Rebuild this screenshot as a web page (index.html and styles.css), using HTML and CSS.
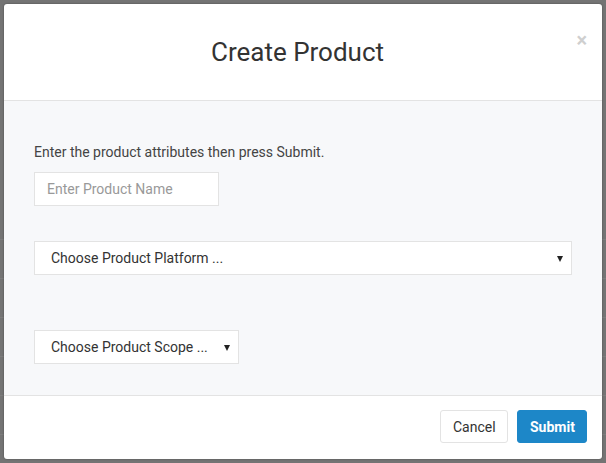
FILE: index.html
```html
<!DOCTYPE html>
<html lang="en">
<head>
<meta charset="utf-8">
<title>Create Product</title>
<link rel="stylesheet" href="styles.css">
</head>
<body>
<div class="backdrop">
  <div class="modal">
    <div class="modal-header">
      <h1 class="modal-title">Create Product</h1>
      <span class="close">&times;</span>
    </div>
    <div class="modal-body">
      <p class="intro">Enter the product attributes then press Submit.</p>
      <div class="input"><span class="placeholder">Enter Product Name</span></div>
      <div class="select select-wide">
        <span class="select-text">Choose Product Platform ...</span>
        <span class="caret"></span>
      </div>
      <div class="select select-narrow">
        <span class="select-text">Choose Product Scope ...</span>
        <span class="caret"></span>
      </div>
    </div>
    <div class="modal-footer">
      <button class="btn btn-default">Cancel</button>
      <button class="btn btn-primary">Submit</button>
    </div>
  </div>
</div>
</body>
</html>
```

FILE: styles.css
```css
* { box-sizing: border-box; }
html, body { margin: 0; padding: 0; }
body {
  font-family: Roboto, "Liberation Sans", sans-serif;
  background: #747474;
  width: 606px;
  height: 463px;
  overflow: hidden;
}
.backdrop {
  padding: 4px 4px 0 4px;
  height: 463px;
  background-color: #747474;
  background-image: repeating-linear-gradient(to bottom, transparent 0, transparent 38px, #7d7d7d 38px, #7d7d7d 39px);
  background-position: 0 201px;
  background-repeat: no-repeat;
  background-size: 100% 262px;
}
.modal {
  width: 598px;
  height: 455px;
  background: #fff;
  border-radius: 3px;
  box-shadow: 0 0 2px rgba(0,0,0,0.4);
  display: flex;
  flex-direction: column;
  overflow: hidden;
}
.modal-header {
  position: relative;
  height: 97px;
  border-bottom: 1px solid #e3e3e3;
  display: flex;
  align-items: center;
  justify-content: center;
}
.modal-title {
  margin: 0 11px 0 0;
  font-size: 26px;
  font-weight: 400;
  color: #333;
  line-height: 30px;
  padding-top: 0;
}
.close {
  position: absolute;
  right: 15px;
  top: 26px;
  font-size: 20px;
  font-weight: 700;
  color: #cfcfcf;
  line-height: 1;
}
.modal-body {
  flex: 1;
  background: #f7f8fa;
  padding: 41px 30px 30px 30px;
  display: flex;
  flex-direction: column;
  align-items: flex-start;
}
.intro {
  margin: 0;
  font-size: 14px;
  line-height: 20px;
  color: #444;
}
.input {
  margin-top: 10px;
  width: 185px;
  height: 34px;
  background: #fff;
  border: 1px solid #e3e3e3;
  padding: 0 12px;
  display: flex;
  align-items: center;
}
.placeholder {
  font-size: 14px;
  color: #999;
}
.select {
  height: 34px;
  background: #fff;
  border: 1px solid #e3e3e3;
  padding: 0 8px 0 16px;
  display: flex;
  align-items: center;
  justify-content: space-between;
}
.select-wide {
  margin-top: 35px;
  width: 538px;
}
.select-narrow {
  margin-top: 55px;
  width: 205px;
}
.select-text {
  font-size: 14px;
  color: #333;
}
.caret {
  width: 0;
  height: 0;
  border-left: 3px solid transparent;
  border-right: 3px solid transparent;
  border-top: 6px solid #222;
  margin-top: 1px;
}
.modal-footer {
  height: 64px;
  border-top: 1px solid #e3e3e3;
  display: flex;
  justify-content: flex-end;
  align-items: flex-start;
  padding: 14px 15px 0 0;
  gap: 9px;
}
.btn {
  height: 33px;
  font-family: Roboto, "Liberation Sans", sans-serif;
  font-size: 14px;
  border-radius: 3px;
  padding: 0 12px;
  cursor: pointer;
}
.btn-default {
  width: 68px;
  background: #fff;
  color: #333;
  border: 1px solid #e3e3e3;
}
.btn-primary {
  width: 70px;
  background: #1d87c8;
  color: #fff;
  border: 1px solid #1d87c8;
  font-weight: 700;
}
```
